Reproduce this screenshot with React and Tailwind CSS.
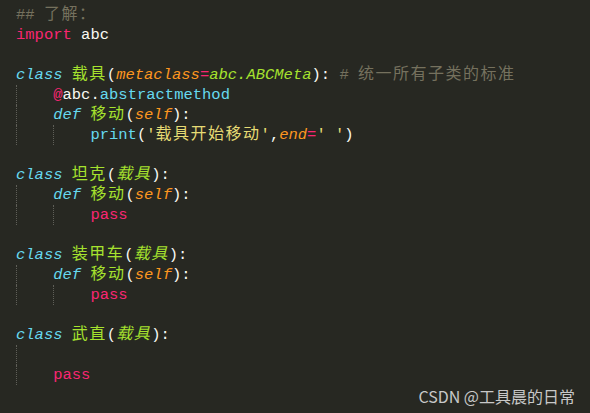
import React from "react";

const P = "text-[#f92672]";
const KW = "italic text-[#66d9ef]";
const FN = "text-[#66d9ef]";
const G = "text-[#a6e22e]";
const GI = "italic text-[#a6e22e]";
const O = "italic text-[#fd971f]";
const Y = "text-[#e6db74]";
const W = "text-[#f8f8f2]";
const M = "text-[#75715e]";

// CJK runs get their own size so they take ~2 columns like in the editor
function Txt({ text }) {
  const parts = text.split(/([\u3000-\u9fff\uff00-\uffef]+)/);
  return parts.map((s, i) =>
    /[\u3000-\u9fff\uff00-\uffef]/.test(s) ? (
      <span key={i} className="text-[16px] tracking-[1.5px]">
        {s}
      </span>
    ) : (
      s
    )
  );
}

const lines = [
  { g: 0, t: [[M, "## 了解："]] },
  { g: 0, t: [[P, "import"], [W, " abc"]] },
  { g: 0, t: [] },
  {
    g: 0,
    t: [
      [KW, "class"], [W, " "], [G, "载具"], [W, "("], [O, "metaclass"], [P, "="],
      [GI, "abc.ABCMeta"], [W, "): "], [M, "# 统一所有子类的标准"],
    ],
  },
  { g: 1, t: [[P, "@"], [W, "abc."], [FN, "abstractmethod"]] },
  { g: 1, t: [[KW, "def"], [W, " "], [G, "移动"], [W, "("], [O, "self"], [W, "):"]] },
  {
    g: 2,
    t: [
      [FN, "print"], [W, "("], [Y, "'载具开始移动'"], [W, ","], [O, "end"], [P, "="],
      [Y, "' '"], [W, ")"],
    ],
  },
  { g: 0, t: [] },
  { g: 0, t: [[KW, "class"], [W, " "], [G, "坦克"], [W, "("], [GI, "载具"], [W, "):"]] },
  { g: 1, t: [[KW, "def"], [W, " "], [G, "移动"], [W, "("], [O, "self"], [W, "):"]] },
  { g: 2, t: [[P, "pass"]] },
  { g: 0, t: [] },
  { g: 0, t: [[KW, "class"], [W, " "], [G, "装甲车"], [W, "("], [GI, "载具"], [W, "):"]] },
  { g: 1, t: [[KW, "def"], [W, " "], [G, "移动"], [W, "("], [O, "self"], [W, "):"]] },
  { g: 2, t: [[P, "pass"]] },
  { g: 0, t: [] },
  { g: 0, t: [[KW, "class"], [W, " "], [G, "武直"], [W, "("], [GI, "载具"], [W, "):"]] },
  { g: 1, t: [] },
  { g: 1, t: [[P, "pass"]] },
];

export default function App() {
  return (
    <div className="relative w-[590px] h-[413px] overflow-hidden bg-[#272822]">
      <div className="pt-[5px] pl-[16px] font-['Liberation_Mono','Noto_Sans_CJK_SC',monospace] text-[15.5px] leading-[20px] whitespace-pre">
        {lines.map((ln, i) => (
          <div key={i} className="flex h-[20px] items-stretch">
            {Array.from({ length: ln.g }).map((_, k) => (
              <span key={k} className="w-[4ch] shrink-0 border-l border-dotted border-[#5f5f58]" />
            ))}
            <span>
              {ln.t.map(([cls, s], j) => (
                <span key={j} className={cls}>
                  <Txt text={s} />
                </span>
              ))}
            </span>
          </div>
        ))}
      </div>
      <div className="absolute right-[15px] bottom-[7px] font-['Noto_Sans_CJK_SC',sans-serif] text-[16px] leading-[20px] text-[#c8c8c8]">
        CSDN @工具晨的日常
      </div>
    </div>
  );
}
